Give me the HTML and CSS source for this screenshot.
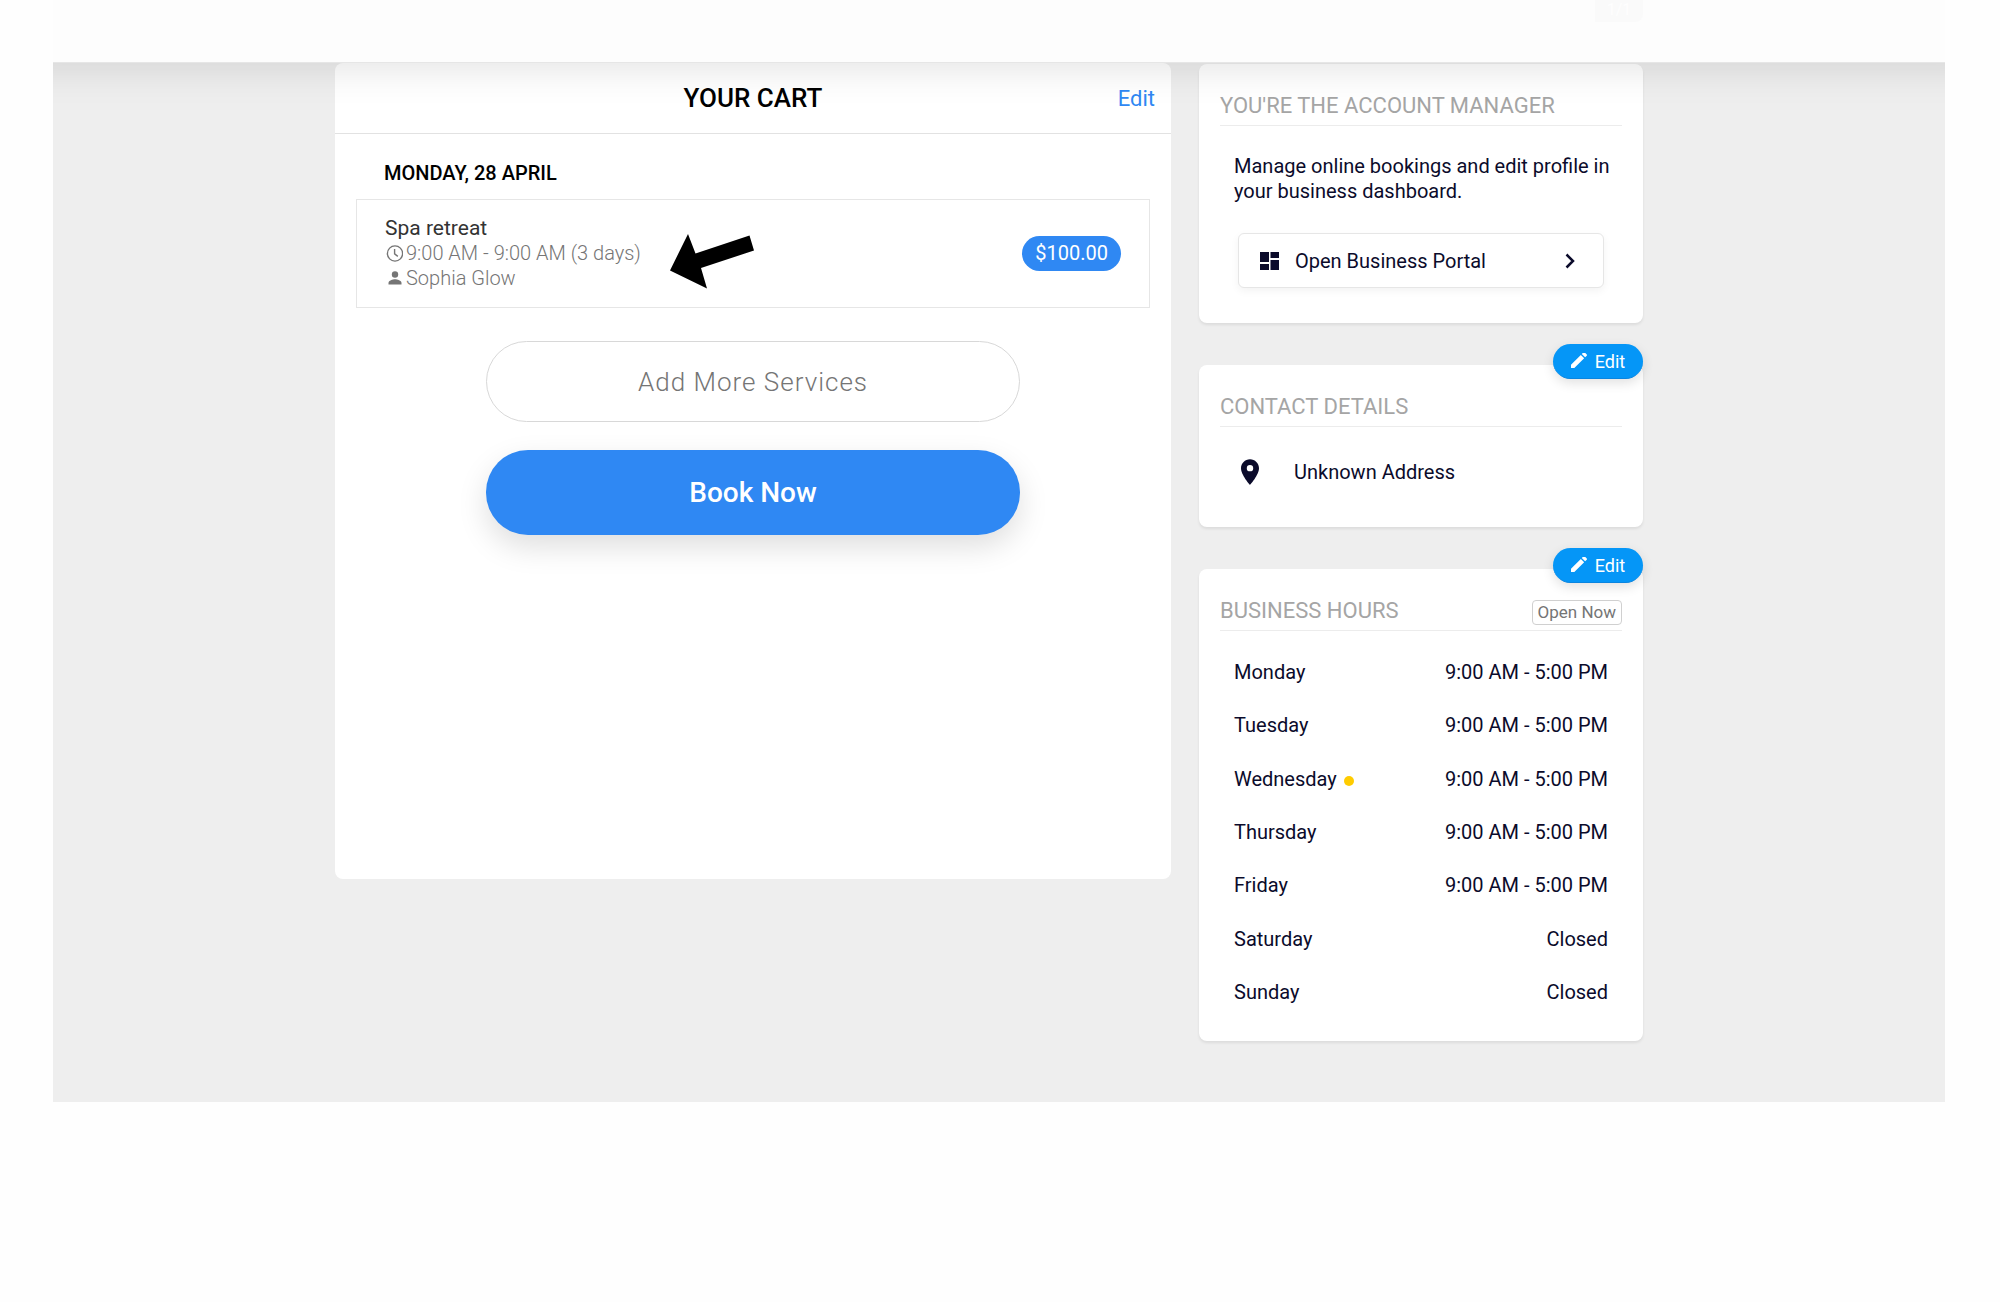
FILE: index.html
```html
<!DOCTYPE html>
<html lang="en">
<head>
    <meta charset="UTF-8">
    <title>Your Cart</title>
    <link rel="stylesheet" href="styles.css">
</head>
<body>
    <div class="page">
        <header class="topbar">
            <span class="counter">1/1</span>
        </header>

        <div class="content">
            <main class="cart">
                <div class="cart-header">
                    <h1>YOUR CART</h1>
                    <a href="#" class="cart-edit">Edit</a>
                </div>

                <h2 class="cart-date">MONDAY, 28 APRIL</h2>

                <div class="cart-item">
                    <div class="item-info">
                        <div class="item-name">Spa retreat</div>
                        <div class="item-line">
                            <svg width="18" height="18" viewBox="0 0 18 18" fill="none" stroke="#757575" stroke-width="1.4"><circle cx="10" cy="8.500" r="7.600"/><path d="M9.600 4v4.800l3.200 2.600"/></svg>
                            <span>9:00 AM - 9:00 AM (3 days)</span>
                        </div>
                        <div class="item-line">
                            <svg width="18" height="18" viewBox="0 0 18 18" fill="#757575"><circle cx="10" cy="4.500" r="3.200"/><path d="M3.500 14.500v-1.600c0-2.500 4.300-3.700 6.500-3.700s6.500 1.200 6.500 3.700v1.600z"/></svg>
                            <span>Sophia Glow</span>
                        </div>
                    </div>
                    <span class="price">$100.00</span>
                    <svg class="arrow" width="84" height="55" viewBox="0 0 84 55"><path d="M0 36.500L18 0l7.500 19.500L79.500 1.500 84 16.500 31 34l6 20.500z"/></svg>
                </div>

                <div class="actions">
                    <button class="btn btn-outline">Add More Services</button>
                    <button class="btn btn-primary">Book Now</button>
                </div>
            </main>

            <aside class="sidebar">
                <section class="card">
                    <div class="card-title"><h3>YOU'RE THE ACCOUNT MANAGER</h3></div>
                    <p class="manager-text">Manage online bookings and edit profile in your business dashboard.</p>
                    <button class="portal">
                        <svg width="19" height="18" viewBox="0 0 19 18" fill="#0b0b2b"><path d="M0 0h9v10H0zM10.500 0H19v6h-8.500zM0 12h9v6H0zM10.500 8H19v10h-8.500z"/></svg>
                        <span>Open Business Portal</span>
                        <svg width="10" height="16" viewBox="0 0 10 16" fill="none" stroke="#0b0b2b" stroke-width="2.500"><path d="M1.500 1.500L8 8l-6.500 6.500"/></svg>
                    </button>
                </section>

                <section class="card">
                    <button class="edit">
                        <svg width="16" height="16" viewBox="3 4 18 18" fill="#fff"><path d="M3 17.250V21h3.750L17.810 9.940l-3.750-3.750L3 17.250zM20.710 7.040a1 1 0 0 0 0-1.410l-2.340-2.340a1 1 0 0 0-1.410 0l-1.830 1.830 3.750 3.750 1.830-1.830z"/></svg>
                        Edit
                    </button>
                    <div class="card-title"><h3>CONTACT DETAILS</h3></div>
                    <div class="address">
                        <svg width="18" height="26" viewBox="5 2 14 20" fill="#0b0b2b"><path d="M12 2C8.130 2 5 5.130 5 9c0 5.250 7 13 7 13s7-7.750 7-13c0-3.870-3.130-7-7-7zm0 9.500a2.500 2.500 0 1 1 0-5 2.500 2.500 0 0 1 0 5z"/></svg>
                        <span>Unknown Address</span>
                    </div>
                </section>

                <section class="card">
                    <button class="edit">
                        <svg width="16" height="16" viewBox="3 4 18 18" fill="#fff"><path d="M3 17.250V21h3.750L17.810 9.940l-3.750-3.750L3 17.250zM20.710 7.040a1 1 0 0 0 0-1.410l-2.340-2.340a1 1 0 0 0-1.410 0l-1.830 1.830 3.750 3.750 1.830-1.830z"/></svg>
                        Edit
                    </button>
                    <div class="card-title">
                        <h3>BUSINESS HOURS</h3>
                        <span class="status">Open Now</span>
                    </div>
                    <table class="hours">
                        <tr><th>Monday</th><td>9:00 AM - 5:00 PM</td></tr>
                        <tr><th>Tuesday</th><td>9:00 AM - 5:00 PM</td></tr>
                        <tr><th>Wednesday<span class="today"></span></th><td>9:00 AM - 5:00 PM</td></tr>
                        <tr><th>Thursday</th><td>9:00 AM - 5:00 PM</td></tr>
                        <tr><th>Friday</th><td>9:00 AM - 5:00 PM</td></tr>
                        <tr><th>Saturday</th><td>Closed</td></tr>
                        <tr><th>Sunday</th><td>Closed</td></tr>
                    </table>
                </section>
            </aside>
        </div>
    </div>
</body>
</html>
```
FILE: styles.css
```css
* {
    box-sizing: border-box;
}
body {
    font-family: Roboto, sans-serif;
    font-size: 20px;
    color: #0b0b2b;
    margin: 0;
    background: #fefefe;
}
h1, h2, h3, p {
    margin: 0;
}
button {
    font-family: inherit;
    cursor: pointer;
}
svg {
    flex: none;
}
.page {
    margin: 0 55px 0 53px;
    background: #eee;
    overflow: hidden;
}

/* top bar */
.topbar {
    position: relative;
    z-index: 2;
    height: 63px;
    margin: 0 -40px;
    padding-right: 342px;
    background: #fdfdfd;
    border-bottom: 1px solid #e6e6e6;
    box-shadow: 0 4px 40px rgba(0, 0, 0, 0.12);
    display: flex;
    justify-content: flex-end;
    align-items: flex-start;
}
.counter {
    width: 48px;
    height: 22px;
    font-size: 16px;
    line-height: 20px;
    text-align: center;
    color: #fefefe;
    background: #fafafa;
    border-radius: 0 0 8px 0;
}

/* layout */
.content {
    max-width: 1328px;
    margin: 0 auto;
    padding: 0 20px 61px 0;
    display: grid;
    grid-template-columns: 836fr 444fr;
    gap: 28px;
    align-items: start;
}

/* cart */
.cart {
    background: #fff;
    border-radius: 8px;
    min-height: 816px;
}
.cart-header {
    height: 71px;
    padding: 0 16px;
    border-bottom: 1px solid #e2e2e2;
    display: grid;
    grid-template-columns: 1fr auto 1fr;
    align-items: center;
}
.cart-header h1 {
    grid-column: 2;
    font-size: 26px;
    font-weight: 500;
    color: #000;
}
.cart-edit {
    justify-self: end;
    font-size: 22px;
    color: #2f88f3;
    text-decoration: none;
}
.cart-date {
    padding: 26px 49px 13px;
    font-size: 20px;
    line-height: 26px;
    font-weight: 500;
    color: #000;
}
.cart-item {
    position: relative;
    margin: 0 21px;
    padding: 16px 28px;
    border: 1px solid #e6e6e6;
    display: flex;
    justify-content: space-between;
    align-items: center;
}
.item-name {
    font-size: 21px;
    line-height: 25px;
    color: #333;
}
.item-line {
    display: flex;
    align-items: center;
    gap: 3px;
    font-size: 20px;
    line-height: 25px;
    font-weight: 300;
    color: #757575;
}
.price {
    padding: 0 13px;
    line-height: 35px;
    border-radius: 18px;
    background: #2f88f3;
    color: #fff;
}
.arrow {
    position: absolute;
    left: 313px;
    top: 34px;
}
.actions {
    margin: 33px 151px;
    display: flex;
    flex-direction: column;
    gap: 28px;
}
.btn {
    border-radius: 42px;
}
.btn-outline {
    height: 81px;
    border: 1px solid #d8d8d8;
    background: #fff;
    color: #757575;
    font-size: 26px;
    font-weight: 300;
    letter-spacing: 1px;
}
.btn-primary {
    height: 85px;
    border: none;
    background: #2f88f3;
    color: #fff;
    font-size: 28px;
    font-weight: 500;
    box-shadow: 0 12px 30px rgba(0, 0, 0, 0.13);
}

/* sidebar */
.sidebar {
    display: flex;
    flex-direction: column;
    gap: 42px;
    padding-top: 1px;
}
.card {
    position: relative;
    padding: 22px 21px;
    background: #fff;
    border-radius: 8px;
    box-shadow: 0 2px 3px rgba(0, 0, 0, 0.08);
}
.card-title {
    height: 40px;
    border-bottom: 1px solid #ececec;
    display: flex;
    justify-content: space-between;
    align-items: center;
}
.card-title h3 {
    font-size: 22px;
    font-weight: 400;
    color: #a5a5a5;
}
.manager-text {
    padding: 28px 0 29px 14px;
    line-height: 25px;
}
.portal {
    width: calc(100% - 36px);
    height: 55px;
    margin: 0 18px 13px;
    padding: 0 28px 0 21px;
    display: flex;
    align-items: center;
    gap: 16px;
    border: 1px solid #e6e6e6;
    border-radius: 6px;
    background: #fff;
    box-shadow: 0 3px 8px rgba(0, 0, 0, 0.05);
    font-size: 20px;
    color: #0b0b2b;
}
.portal span {
    flex: 1;
    text-align: left;
}
.edit {
    position: absolute;
    top: -21px;
    right: 0;
    width: 90px;
    height: 35px;
    padding: 0;
    border: none;
    border-bottom: 1px solid #0a85e0;
    border-radius: 18px;
    background: #0596f7;
    color: #fff;
    font-size: 18px;
    display: flex;
    align-items: center;
    justify-content: center;
    gap: 8px;
    box-shadow: 0 4px 12px rgba(0, 0, 0, 0.12);
}
.address {
    padding: 32px 21px 20px;
    display: flex;
    align-items: center;
    gap: 35px;
}
.status {
    margin-top: 4px;
    padding: 0 5px;
    line-height: 23px;
    border: 1px solid #d0d0d0;
    border-radius: 4px;
    font-size: 17px;
    color: #757575;
}
.hours {
    width: 100%;
    height: 374px;
    margin-top: 14px;
    padding: 0 14px;
    border-spacing: 0;
}
.hours th, .hours td {
    padding: 0;
    font-weight: 400;
    text-align: left;
}
.hours td {
    text-align: right;
}
.today {
    display: inline-block;
    width: 10px;
    height: 10px;
    margin-left: 7px;
    border-radius: 50%;
    background: #fc0;
}
```
